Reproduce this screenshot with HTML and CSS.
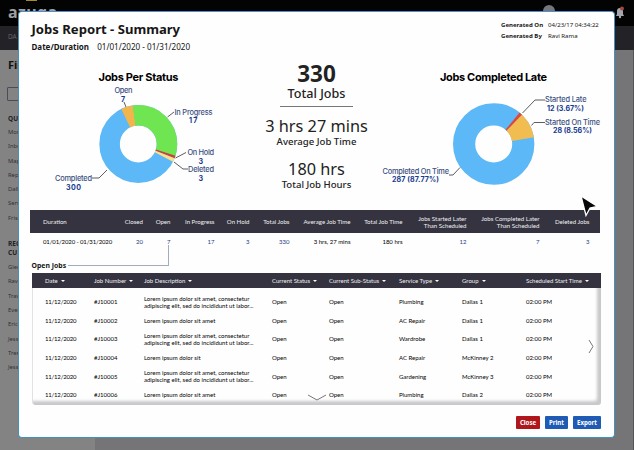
FILE: index.html
```html
<!DOCTYPE html>
<html lang="en">
<head>
  <meta charset="UTF-8">
  <meta name="viewport" content="width=device-width, initial-scale=1.0">
  <title>Jobs Report - Summary</title>
  <link rel="stylesheet" href="styles.css">
</head>
<body>
  <!-- Page behind the report -->
  <header class="topbar">
    <span class="logo">az<span class="logo-u">u</span>ga</span>
    <span class="avatar"></span>
    <svg class="bell" width="10" height="13" viewBox="0 0 10 13">
      <path d="M1 10 L2 8 V5 Q2 2 5 2 Q8 2 8 5 V8 L9 10 Z" fill="#a5a5ad"/>
      <circle cx="5" cy="11" r="1.2" fill="#a5a5ad"/>
      <circle cx="7" cy="2.5" r="2" fill="#a04a3c"/>
    </svg>
  </header>
  <nav class="navbar">DA</nav>
  <div class="page">
    <aside class="sidebar">
      <h2>Find</h2>
      <div class="search"></div>
      <h3>QUICK</h3>
      <ul>
        <li>Monitor</li>
        <li>Inbox</li>
        <li>Maps</li>
        <li>Reports</li>
        <li>Dallas</li>
        <li>Service</li>
        <li>Frisco</li>
      </ul>
      <h3 class="recent">REC<br>CU</h3>
      <ul>
        <li>Glenn</li>
        <li>Ravi</li>
        <li>Travis</li>
        <li>Evelyn</li>
        <li>Erica</li>
        <li>Jess</li>
        <li>Trem</li>
        <li>Jess</li>
      </ul>
    </aside>
  </div>

  <div class="modal">
    <div class="modal-head">
      <div>
        <h1>Jobs Report - Summary</h1>
        <p class="duration"><b>Date/Duration</b> <span>01/01/2020 - 01/31/2020</span></p>
      </div>
      <div class="generated">
        <b>Generated On</b><span>04/23/17 04:34:22</span>
        <b>Generated By</b><span>Ravi Rama</span>
      </div>
    </div>

    <div class="stats">
      <svg class="chart" width="190" height="130" viewBox="30 66 190 130">
        <text class="chart-title" x="98.5" y="81" textLength="80">Jobs Per Status</text>
        <g transform="translate(138.3 144) rotate(-90)" fill="none" stroke-width="20.5">
          <circle r="28.7" pathLength="360" stroke="#5cb8f6"/>
          <circle r="28.7" pathLength="360" stroke="#f2b54c" stroke-dasharray="18 342" stroke-dashoffset="26"/>
          <circle r="28.7" pathLength="360" stroke="#70e552" stroke-dasharray="117 243" stroke-dashoffset="8.4"/>
          <circle r="28.7" pathLength="360" stroke="#c8413b" stroke-dasharray="4 356" stroke-dashoffset="-107.5"/>
          <circle r="28.7" pathLength="360" stroke="#fbdf8c" stroke-dasharray="5.5 354.5" stroke-dashoffset="-111.5"/>
        </g>
        <g class="leader">
          <path d="M124 102 L126 107"/>
          <path d="M167.5 117 L174 112"/>
          <path d="M175.5 158 L186 152.5"/>
          <path d="M174 162 L183 169 H188"/>
          <path d="M107 170 L99 178 H92"/>
        </g>
        <text class="label" x="114.5" y="93" textLength="18">Open</text>
        <text class="value" x="121" y="102" textLength="5">7</text>
        <text class="label" x="174.5" y="114.5" textLength="38">In Progress</text>
        <text class="value" x="189" y="123" textLength="8.5">17</text>
        <text class="label" x="187.5" y="155" textLength="26.5">On Hold</text>
        <text class="value" x="198.5" y="163.5" textLength="5">3</text>
        <text class="label" x="188" y="172" textLength="26">Deleted</text>
        <text class="value" x="198.5" y="180.5" textLength="5">3</text>
        <text class="label" x="55" y="181" textLength="37">Completed</text>
        <text class="value" x="66" y="189.5" textLength="15">300</text>
      </svg>

      <div class="totals">
        <div class="total main">
          <strong>330</strong>
          <span>Total Jobs</span>
        </div>
        <div class="total average">
          <strong>3 hrs 27 mins</strong>
          <span>Average Job Time</span>
        </div>
        <div class="total hours">
          <strong>180 hrs</strong>
          <span>Total Job Hours</span>
        </div>
      </div>

      <svg class="chart" width="224" height="130" viewBox="380 66 224 130">
        <text class="chart-title" x="440" y="81" textLength="107">Jobs Completed Late</text>
        <g transform="translate(493.7 144) rotate(-90)" fill="none" stroke-width="22.2">
          <circle r="29.6" pathLength="360" stroke="#5cb8f6"/>
          <circle r="29.6" pathLength="360" stroke="#db4840" stroke-dasharray="5 355" stroke-dashoffset="-39.5"/>
          <circle r="29.6" pathLength="360" stroke="#f2bd50" stroke-dasharray="36.5 323.5" stroke-dashoffset="-44"/>
        </g>
        <g class="leader">
          <path d="M522.5 113 L535 100 H545"/>
          <path d="M531.5 125.5 L534 122.5 H545"/>
          <path d="M460 167.5 L453 175 H449"/>
        </g>
        <text class="label" x="545" y="102" textLength="41.5">Started Late</text>
        <text class="value" x="547" y="110.5" textLength="37">12 (3.67%)</text>
        <text class="label" x="545" y="124.5" textLength="55">Started On Time</text>
        <text class="value" x="553" y="133" textLength="39">28 (8.56%)</text>
        <text class="label" x="382.5" y="173.5" textLength="66.5">Completed On Time</text>
        <text class="value" x="392" y="182" textLength="47">287 (87.77%)</text>
      </svg>
    </div>

    <div class="summary">
      <div class="summary-row summary-head">
        <span>Duration</span><span>Closed</span><span>Open</span><span>In Progress</span><span>On Hold</span>
        <span>Total Jobs</span><span>Average Job Time</span><span>Total Job Time</span>
        <span>Jobs Started Later<br>Than Scheduled</span><span>Jobs Completed Later<br>Than Scheduled</span><span>Deleted Jobs</span>
      </div>
      <div class="summary-row summary-values">
        <span>01/01/2020 - 01/31/2020</span><a>20</a><a>7</a><a>17</a><a>3</a>
        <a>330</a><span>3 hrs, 27 mins</span><span>180 hrs</span><a>12</a><a>7</a><a>3</a>
      </div>
    </div>

    <div class="open-jobs"><b>Open Jobs</b><i class="connector"></i></div>

    <div class="jobs">
      <div class="job job-head">
        <span>Date</span><span>Job Number</span><span>Job Description</span><span>Current Status</span>
        <span>Current Sub-Status</span><span>Service Type</span><span>Group</span><span>Scheduled Start Time</span>
      </div>
      <div class="jobs-body">
        <div class="job"><span>11/12/2020</span><span>#J10001</span><span>Lorem ipsum dolor sit amet, consectetur<br>adipiscing elit, sed do incididunt ut labor...</span><span>Open</span><span>Open</span><span>Plumbing</span><span>Dallas 1</span><span>02:00 PM</span></div>
        <div class="job"><span>11/12/2020</span><span>#J10002</span><span>Lorem ipsum dolor sit amet</span><span>Open</span><span>Open</span><span>AC Repair</span><span>Dallas 1</span><span>02:00 PM</span></div>
        <div class="job"><span>11/12/2020</span><span>#J10003</span><span>Lorem ipsum dolor sit amet, consectetur<br>adipiscing elit, sed do incididunt ut labor...</span><span>Open</span><span>Open</span><span>Wardrobe</span><span>Dallas 1</span><span>02:00 PM</span></div>
        <div class="job"><span>11/12/2020</span><span>#J10004</span><span>Lorem ipsum dolor sit</span><span>Open</span><span>Open</span><span>AC Repair</span><span>McKinney 2</span><span>02:00 PM</span></div>
        <div class="job"><span>11/12/2020</span><span>#J10005</span><span>Lorem ipsum dolor sit amet, consectetur<br>adipiscing elit, sed do incididunt ut labor...</span><span>Open</span><span>Open</span><span>Gardening</span><span>McKinney 3</span><span>02:00 PM</span></div>
        <div class="job"><span>11/12/2020</span><span>#J10006</span><span>Lorem ipsum dolor sit amet</span><span>Open</span><span>Open</span><span>Plumbing</span><span>Dallas 2</span><span>02:00 PM</span></div>
        <svg class="scroll-down" width="20" height="7" viewBox="0 0 20 7"><path d="M1 1 L10 6 L19 1"/></svg>
        <svg class="scroll-right" width="6" height="15" viewBox="0 0 6 15"><path d="M1 1 L5 7.5 L1 14"/></svg>
      </div>
    </div>

    <div class="actions">
      <button class="btn close">Close</button>
      <button class="btn print">Print</button>
      <button class="btn export">Export</button>
    </div>
  </div>

  <svg class="cursor" width="21" height="24" viewBox="0 0 21 24">
    <path d="M2 2 L18.5 12.5 L11 14 L7 21.5 Z"/>
  </svg>
</body>
</html>
```
FILE: styles.css
```css
* {
  box-sizing: border-box;
}
body {
  margin: 0;
  height: 450px;
  overflow: hidden;
  background: #757477;
  color: #161616;
  font-family: "Noto Sans", sans-serif;
}
h1, h2, h3, p, ul {
  margin: 0;
  padding: 0;
}

/* page behind */
.topbar {
  display: flex;
  height: 26px;
  padding: 0 9px 0 8px;
  background: #030304;
}
.logo {
  flex: 1;
  color: #a0a0a0;
  font: bold 16px/25px "Noto Sans", sans-serif;
  letter-spacing: 0.4px;
}
.logo-u {
  border-top: 1px solid #a58a2e;
}
.avatar {
  width: 12px;
  height: 12px;
  margin: 5px 60px 0 0;
  border-radius: 50%;
  background: #77777b;
}
.bell {
  margin-top: 6px;
}
.navbar {
  height: 24px;
  padding-left: 8px;
  background: #222227;
  color: #66666c;
  font-size: 6.5px;
  line-height: 22px;
}
.page {
  height: 400px;
  border-right: 1px solid #555459;
}
.sidebar {
  width: 95px;
  height: 400px;
  padding: 6px 8px;
  background: #848384;
  color: #303034;
}
.sidebar h2 {
  color: #111;
  font-size: 11px;
  line-height: 18px;
}
.search {
  height: 14px;
  margin: 13px 0 12px -1px;
  border: 1px solid #4a4c58;
  border-radius: 1px;
}
.sidebar h3 {
  color: #222226;
  font-size: 6.5px;
  line-height: 12px;
}
.sidebar h3.recent {
  margin-top: 14px;
  line-height: 9px;
}
.sidebar ul {
  list-style: none;
  font-size: 5.8px;
  line-height: 14.3px;
}
.sidebar .recent + ul {
  margin-top: 3px;
}

/* report */
.modal {
  position: absolute;
  left: 18px;
  top: 11px;
  width: 597px;
  height: 427px;
  padding: 9px 12px 0 11px;
  border: 1px solid #3f93bd;
  border-top-color: #4a8fd0;
  border-radius: 4px;
  background: #fefefe;
}
.modal-head {
  display: flex;
  justify-content: space-between;
  height: 45px;
  padding-left: 1.5px;
}
h1 {
  font-size: 13.1px;
  line-height: 16px;
}
.duration {
  margin-top: 4px;
  font-size: 8.1px;
  line-height: 12px;
}
.duration span {
  margin-left: 6px;
}
.duration b {
  font-size: 8px;
}
.generated {
  display: grid;
  grid-template-columns: 47px 53px;
  grid-auto-rows: 11px;
  margin-right: 1px;
  font-size: 6.05px;
  line-height: 8px;
}
.stats {
  display: flex;
  height: 144px;
}
.chart {
  flex-shrink: 0;
}
.chart-title {
  font: bold 11px "Inter", sans-serif;
}
.label {
  fill: #3a4f80;
  font: 500 7.4px "Inter", sans-serif;
}
.value {
  fill: #173a8f;
  font: bold 7.1px "Inter", sans-serif;
}
.leader {
  fill: none;
  stroke: #4b4b50;
  stroke-width: 0.9;
}
.totals {
  flex: 0 0 160px;
  padding-left: 33px;
  text-align: center;
  white-space: nowrap;
}
.total {
  display: flex;
  flex-direction: column;
  align-items: center;
  color: #222;
}
.main {
  width: 73px;
  margin: -5px auto 0;
  border-bottom: 1px solid #77777a;
}
.main strong {
  font-size: 22.5px;
  line-height: 25px;
}
.main span {
  margin-bottom: 4px;
  font-size: 12.6px;
  font-weight: 500;
  line-height: 16px;
}
.average {
  margin-top: 9px;
}
.average strong, .hours strong {
  font-size: 16.3px;
  font-weight: 400;
  line-height: 20px;
}
.average span, .hours span {
  font-size: 9.6px;
  font-weight: 500;
  line-height: 11px;
}
.hours {
  margin-top: 12px;
}

.summary {
  width: 570px;
  font: 6.1px/7px "Lato", sans-serif;
}
.summary-row {
  display: grid;
  grid-template-columns: 82px 31px 27.5px 44px 35px 40px 61px 52px 64px 73px 50px;
  align-items: center;
  text-align: right;
  white-space: nowrap;
}
.summary-row > :first-child {
  padding-left: 13px;
  text-align: left;
}
.summary-head {
  height: 23px;
  background: #34333f;
  color: #f0f0f4;
}
.summary-values {
  height: 16px;
  color: #000;
  font-size: 6px;
}
.summary-values > :first-child {
  letter-spacing: -0.12px;
}
.summary-values a {
  color: #26407c;
}
.open-jobs {
  display: flex;
  height: 24px;
  padding-left: 1.5px;
  font-size: 6.9px;
  line-height: 33px;
}
.connector {
  width: 101px;
  height: 21px;
  margin: -4px 0 0 2px;
  border: solid #a3abbd;
  border-width: 0 1px 1px 0;
}

.jobs {
  width: 569px;
  margin-left: 2px;
  color: #000;
  font: 6px/7px "Lato", sans-serif;
}
.job {
  display: grid;
  grid-template-columns: 49px 50px 128px 57px 70px 63px 64px 1fr;
  align-items: center;
  height: 18.6px;
  padding-left: 13px;
  white-space: nowrap;
}
.job-head {
  height: 15px;
  background: #34333f;
  color: #f0f0f4;
}
.job-head span::after {
  content: "";
  display: inline-block;
  margin: 0 0 1px 3px;
  border: 2px solid transparent;
  border-top-color: #fff;
  border-bottom: 0;
}
.jobs-body {
  position: relative;
  height: 117px;
  padding-top: 4.4px;
  border-left: 1px solid #e2e2e4;
  border-radius: 0 0 3px 3px;
  box-shadow: inset -4px -4px 3px #c9c9cc;
}
.jobs-body .job {
  padding-left: 12px;
}
.jobs-body .job > :first-child {
  letter-spacing: -0.2px;
}
.scroll-down, .scroll-right {
  position: absolute;
  fill: none;
  stroke: #77777b;
}
.scroll-down {
  left: 274px;
  bottom: 4px;
}
.scroll-right {
  right: 7px;
  top: 51px;
}
.actions {
  display: flex;
  justify-content: flex-end;
  gap: 5px;
  margin: 11px 1px 0 0;
}
.btn {
  height: 13px;
  padding: 0;
  border: 0;
  border-radius: 1px;
  background: #1f5bb5;
  color: #fff;
  font: bold 6.1px "Noto Sans", sans-serif;
}
.close {
  width: 24px;
  background: #b0171c;
}
.print {
  width: 23px;
}
.export {
  width: 28px;
}
.cursor {
  position: absolute;
  left: 579px;
  top: 194px;
  fill: #080808;
  stroke: #fff;
  stroke-width: 1.3;
}
```
